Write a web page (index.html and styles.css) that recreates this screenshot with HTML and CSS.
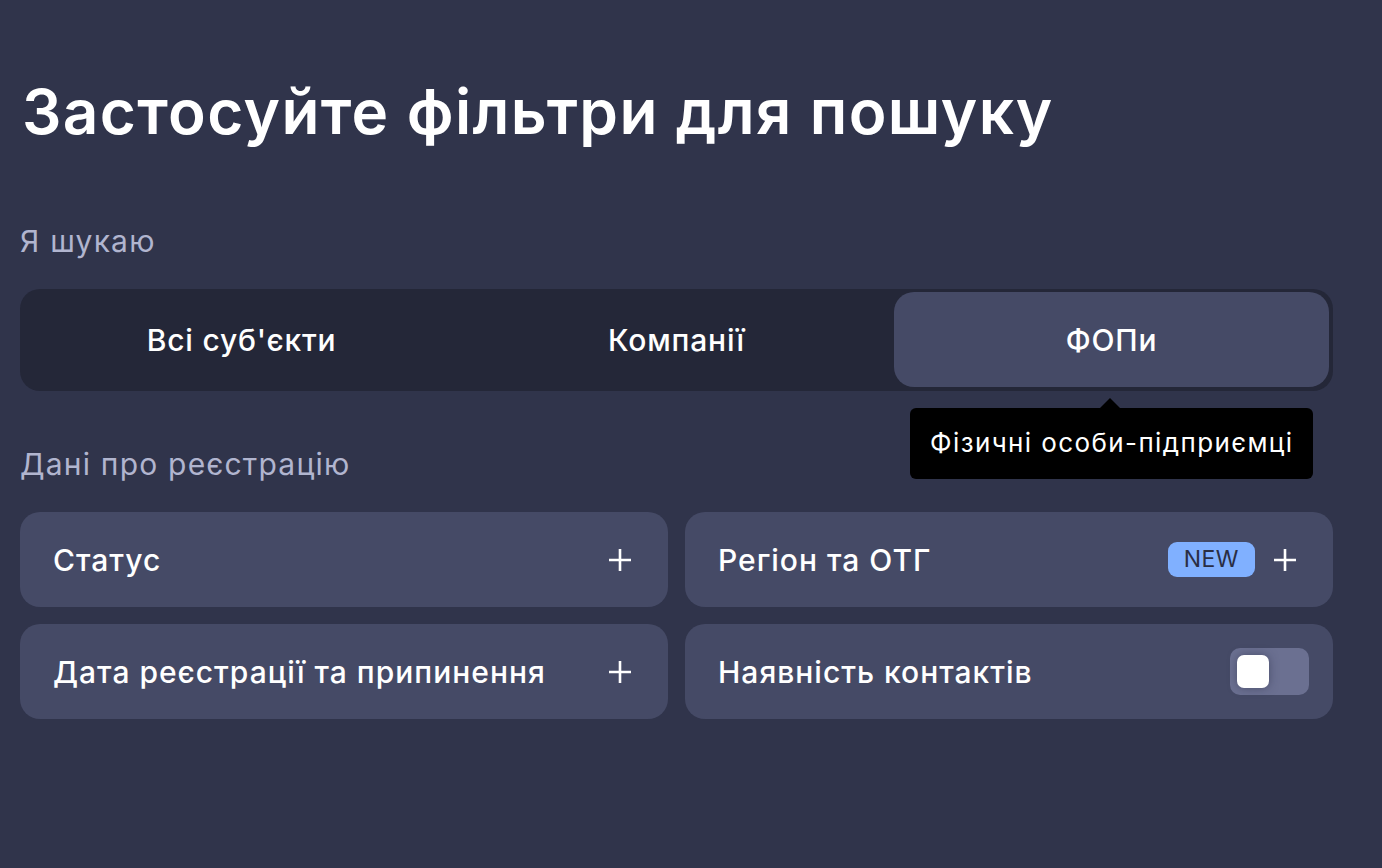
FILE: index.html
```html
<!DOCTYPE html>
<html>
<head>
  <title>Фільтри</title>
  <link rel="stylesheet" href="styles.css">
</head>
<body>
  <div class="page">
    <h1 class="title">Застосуйте фільтри для пошуку</h1>

    <div class="label label-first">Я шукаю</div>
    <div class="segments">
      <button class="seg">Всі суб'єкти</button>
      <button class="seg">Компанії</button>
      <button class="seg seg-active">ФОПи
        <span class="tooltip">Фізичні особи-підприємці</span>
      </button>
    </div>

    <div class="label label-second">Дані про реєстрацію</div>
    <div class="cards">
      <div class="card">
        <span>Статус</span>
        <svg class="plus" width="24" height="24" viewBox="0 0 24 24"><path d="M12 1v22M1 12h22" stroke="#fff" stroke-width="2.6" fill="none"/></svg>
      </div>
      <div class="card">
        <span>Регіон та ОТГ</span>
        <div class="card-right">
          <span class="badge">NEW</span>
          <svg class="plus" width="24" height="24" viewBox="0 0 24 24"><path d="M12 1v22M1 12h22" stroke="#fff" stroke-width="2.6" fill="none"/></svg>
        </div>
      </div>
      <div class="card">
        <span>Дата реєстрації та припинення</span>
        <svg class="plus" width="24" height="24" viewBox="0 0 24 24"><path d="M12 1v22M1 12h22" stroke="#fff" stroke-width="2.6" fill="none"/></svg>
      </div>
      <div class="card">
        <span>Наявність контактів</span>
        <div class="toggle"><div class="knob"></div></div>
      </div>
    </div>
  </div>
</body>
</html>
```

FILE: styles.css
```css
body {
  margin: 0;
  background: #30344b;
  font-family: Inter, "Noto Sans", sans-serif;
  color: #fff;
  min-height: 100vh;
}

.page {
  padding: 70px 49px 0 20px;
}

.title {
  margin: 0 0 0 2px;
  font-size: 62px;
  font-weight: 600;
  line-height: 84px;
  letter-spacing: 1.4px;
}

.label {
  color: #b1b5cf;
  font-size: 30px;
  line-height: 36px;
  letter-spacing: 1.2px;
}

.label-first {
  margin-top: 69px;
  margin-bottom: 30px;
}

.label-second {
  margin-top: 55px;
  margin-bottom: 30px;
}

.segments {
  display: grid;
  grid-template-columns: 1fr 1fr 1fr;
  background: #242738;
  border-radius: 20px;
  padding: 3px 4px 4px 4px;
  height: 95px;
}

.seg {
  position: relative;
  background: none;
  border: none;
  color: #fff;
  font-family: inherit;
  font-size: 30px;
  font-weight: 500;
  letter-spacing: 0.8px;
  border-radius: 20px;
}

.seg-active {
  background: #454a66;
}

.tooltip {
  position: absolute;
  top: 116px;
  left: 16px;
  background: #000;
  color: #fff;
  font-size: 26px;
  font-weight: 400;
  white-space: nowrap;
  padding: 19px 20px 20px 20px;
  line-height: 32px;
  border-radius: 6px;
  letter-spacing: 1.4px;
}

.tooltip::before {
  content: "";
  position: absolute;
  top: -10px;
  left: 190px;
  border-left: 10px solid transparent;
  border-right: 10px solid transparent;
  border-bottom: 10px solid #000;
}

.cards {
  display: grid;
  grid-template-columns: 1fr 1fr;
  gap: 17px;
}

.card {
  display: flex;
  align-items: center;
  justify-content: space-between;
  background: #454a66;
  border-radius: 20px;
  height: 95px;
  padding: 0 24px 0 33px;
  font-size: 30px;
  font-weight: 500;
  letter-spacing: 1px;
}

.card-right {
  display: flex;
  align-items: center;
  gap: 18px;
}

.plus {
  margin-right: 12px;
}

.badge {
  background: #80b0ff;
  color: #2a2e44;
  font-size: 23px;
  font-weight: 400;
  letter-spacing: 0.5px;
  padding: 0 16px;
  height: 35px;
  line-height: 35px;
  border-radius: 9px;
}

.toggle {
  width: 79px;
  height: 47px;
  background: #6b7091;
  border-radius: 10px;
  display: flex;
  align-items: center;
  padding-left: 7px;
  box-sizing: border-box;
}

.knob {
  width: 32px;
  height: 33px;
  background: #fff;
  border-radius: 7px;
  box-shadow: 0 0 10px rgba(40, 44, 70, 0.5);
}
```
